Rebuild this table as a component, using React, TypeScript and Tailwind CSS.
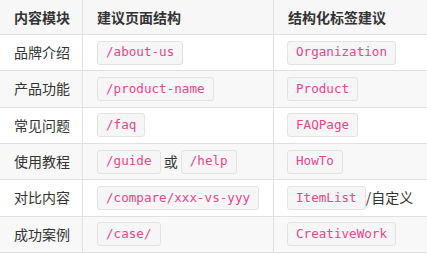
import React from "react";

type Part = { code?: string; text?: string };
type Row = { name: string; path: Part[]; tag: Part[] };

const rows: Row[] = [
  { name: "品牌介绍", path: [{ code: "/about-us" }], tag: [{ code: "Organization" }] },
  { name: "产品功能", path: [{ code: "/product-name" }], tag: [{ code: "Product" }] },
  { name: "常见问题", path: [{ code: "/faq" }], tag: [{ code: "FAQPage" }] },
  {
    name: "使用教程",
    path: [{ code: "/guide" }, { text: " 或 " }, { code: "/help" }],
    tag: [{ code: "HowTo" }],
  },
  {
    name: "对比内容",
    path: [{ code: "/compare/xxx-vs-yyy" }],
    tag: [{ code: "ItemList" }, { text: "/自定义" }],
  },
  { name: "成功案例", path: [{ code: "/case/" }], tag: [{ code: "CreativeWork" }] },
];

function Code({ children }: { children: string }) {
  return (
    <code
      className="inline-flex h-[24px] items-center rounded-[3px] border border-[#e3e3e3] bg-[#f6f6f6] px-[8px] text-[12.6px] leading-none text-[#e8458b]"
      style={{ fontFamily: '"DejaVu Sans Mono", "Liberation Mono", monospace' }}
    >
      {children}
    </code>
  );
}

function Parts({ parts }: { parts: Part[] }) {
  return (
    <span className="flex items-center whitespace-pre">
      {parts.map((p, i) =>
        p.code ? <Code key={i}>{p.code}</Code> : <span key={i}>{p.text}</span>
      )}
    </span>
  );
}

export default function App() {
  const font = { fontFamily: '"Noto Sans CJK SC", "Noto Sans", sans-serif' };
  return (
    <div className="h-[254px] w-[427px] overflow-hidden bg-white text-[14px] text-[#333]" style={font}>
      <div className="grid h-[35px] grid-cols-[83px_191px_1fr] border-b border-[#e0e0e0] bg-[#f7f7f7] font-bold">
        <div className="flex items-center border-r border-[#e0e0e0] pl-[14px]">内容模块</div>
        <div className="flex items-center border-r border-[#e0e0e0] pl-[14px]">建议页面结构</div>
        <div className="flex items-center pl-[14px]">结构化标签建议</div>
      </div>
      {rows.map((r, i) => (
        <div
          key={r.name}
          className={`grid h-[36.33px] grid-cols-[83px_191px_1fr] border-b border-[#e0e0e0] ${
            i % 2 === 1 ? "bg-[#f8f8f8]" : "bg-white"
          }`}
        >
          <div className="flex items-center border-r border-[#e0e0e0] pl-[14px]">{r.name}</div>
          <div className="flex items-center border-r border-[#e0e0e0] pl-[14px]">
            <Parts parts={r.path} />
          </div>
          <div className="flex items-center pl-[13px]">
            <Parts parts={r.tag} />
          </div>
        </div>
      ))}
    </div>
  );
}
